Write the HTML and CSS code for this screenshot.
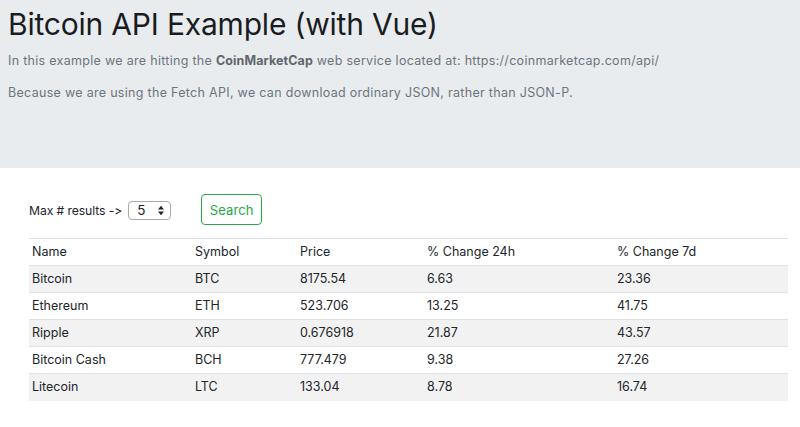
FILE: index.html
```html
<!DOCTYPE html>
<html lang="en">
<head>
<meta charset="utf-8">
<title>Bitcoin API Example (with Vue)</title>
<link rel="stylesheet" href="styles.css">
</head>
<body>
<header class="jumbotron">
  <h1 class="title">Bitcoin API Example (with Vue)</h1>
  <p class="intro">In this example we are hitting the <strong>CoinMarketCap</strong> web service located at: https://coinmarketcap.com/api/</p>
  <p class="intro">Because we are using the Fetch API, we can download ordinary JSON, rather than JSON-P.</p>
</header>
<main class="content">
  <div class="controls">
    <label class="max-label">Max # results -&gt;
      <span class="select-wrap">
        <select class="select">
          <option>1</option><option>2</option><option>3</option><option>4</option><option selected>5</option>
        </select>
        <svg class="select-arrows" width="8" height="11" viewBox="0 0 8 11"><path d="M4 0.8 L7 4.4 H1 Z M4 10.2 L7 6.6 H1 Z" fill="#222"/></svg>
      </span>
    </label>
    <button class="btn-search" type="button">Search</button>
  </div>
  <table class="coins">
    <colgroup>
      <col class="c-name"><col class="c-sym"><col class="c-price"><col class="c-24"><col class="c-7">
    </colgroup>
    <thead>
      <tr><th>Name</th><th>Symbol</th><th>Price</th><th>% Change 24h</th><th>% Change 7d</th></tr>
    </thead>
    <tbody>
      <tr><td>Bitcoin</td><td>BTC</td><td>8175.54</td><td>6.63</td><td>23.36</td></tr>
      <tr><td>Ethereum</td><td>ETH</td><td>523.706</td><td>13.25</td><td>41.75</td></tr>
      <tr><td>Ripple</td><td>XRP</td><td>0.676918</td><td>21.87</td><td>43.57</td></tr>
      <tr><td>Bitcoin Cash</td><td>BCH</td><td>777.479</td><td>9.38</td><td>27.26</td></tr>
      <tr><td>Litecoin</td><td>LTC</td><td>133.04</td><td>8.78</td><td>16.74</td></tr>
    </tbody>
  </table>
</main>
</body>
</html>
```

FILE: styles.css
```css
* { box-sizing: border-box; }
html, body { margin: 0; padding: 0; background: #fff; }
body {
  font-family: Inter, "Liberation Sans", Arial, sans-serif;
  font-feature-settings: "calt" 0, "liga" 0;
  font-size: 12.8px;
  color: #212529;
}
.jumbotron {
  background: #e9ecef;
  height: 168px;
  padding: 6px 8px 0;
}
.title {
  margin: 0;
  font-size: 30px;
  font-weight: 400;
  line-height: 36px;
  letter-spacing: -0.2px;
  color: #1a1c1f;
}
.intro {
  margin: 9px 0 0;
  font-size: 12.5px;
  line-height: 19px;
  letter-spacing: 0.3px;
  color: #6c757d;
}
.intro + .intro { margin-top: 12.6px; }
.intro strong { font-weight: 700; color: #5f666d; letter-spacing: 0.1px; }

.content { padding: 26px 12px 0 29px; }
.controls {
  display: flex;
  align-items: center;
  height: 31px;
}
.max-label {
  display: flex;
  align-items: center;
  gap: 6px;
  font-size: 12.2px;
  letter-spacing: -0.1px;
  color: #212529;
  margin-top: 1px;
}
.select-wrap { position: relative; display: inline-block; width: 43px; height: 19px; }
.select {
  appearance: none;
  -webkit-appearance: none;
  width: 43px;
  height: 19px;
  border: 1px solid #a9a9a9;
  border-radius: 4px;
  background: #fff;
  font: inherit;
  font-size: 13.5px;
  line-height: 17px;
  padding: 0 0 0 8px;
  color: #212529;
}
.select-arrows { position: absolute; right: 6px; top: 4px; pointer-events: none; }
.btn-search {
  margin-left: 30px;
  width: 61px;
  height: 31px;
  border: 1px solid #28a745;
  border-radius: 4px;
  background: #fff;
  color: #28a745;
  font: inherit;
  font-size: 13px;
  letter-spacing: 0.1px;
  padding: 0;
}
.coins {
  margin-top: 13px;
  width: 759px;
  border-collapse: collapse;
  table-layout: fixed;
}
.c-name { width: 163px; }
.c-sym { width: 105px; }
.c-price { width: 127px; }
.c-24 { width: 190px; }
.c-7 { width: 174px; }
.coins th, .coins td {
  text-align: left;
  font-weight: 400;
  font-size: 12.5px;
  padding: 3px 3px;
  height: 27px;
  line-height: 20px;
  border-top: 1px solid #dee2e6;
  vertical-align: middle;
}
.coins tbody tr:nth-child(odd) { background: #f2f2f2; }
```
